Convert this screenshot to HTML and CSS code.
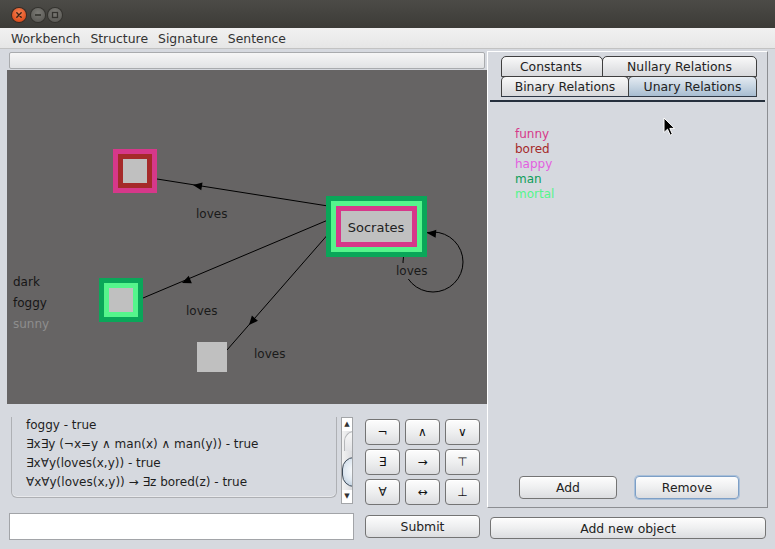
FILE: index.html
```html
<!DOCTYPE html>
<html>
<head>
<meta charset="utf-8">
<link rel="stylesheet" href="styles.css">
</head>
<body>
<div class="window">
  <div class="titlebar">
    <span class="wbtn close"><svg width="14" height="14" viewBox="0 0 14 14"><path d="M4.8 4.8 L9.2 9.2 M9.2 4.8 L4.8 9.2" stroke="#3a2418" stroke-width="1.4" stroke-linecap="round"/></svg></span>
    <span class="wbtn gray"><svg width="14" height="14" viewBox="0 0 14 14"><path d="M4 7 H10" stroke="#33322e" stroke-width="1.6"/></svg></span>
    <span class="wbtn gray"><svg width="14" height="14" viewBox="0 0 14 14"><rect x="4.5" y="4.5" width="5" height="5" fill="none" stroke="#33322e" stroke-width="1.3"/></svg></span>
  </div>
  <div class="menubar">
    <span>Workbench</span><span>Structure</span><span>Signature</span><span>Sentence</span>
  </div>
  <div class="main">
    <div class="left">
      <div class="progress"></div>
      <div class="canvas">
        <svg width="480" height="334" viewBox="0 0 480 334" class="graph">
          <g stroke="#000" stroke-width="1" fill="none">
            <line x1="321" y1="136" x2="150" y2="109"/>
            <line x1="321" y1="150" x2="136" y2="228"/>
            <line x1="323" y1="162" x2="220" y2="280"/>
            <circle cx="426" cy="192" r="30"/>
          </g>
          <g fill="#000">
            <polygon points="0,0 -9,-4 -9,4" transform="translate(186 115) rotate(189)"/>
            <polygon points="0,0 -9,-4 -9,4" transform="translate(175 213) rotate(157)"/>
            <polygon points="0,0 -9,-4 -9,4" transform="translate(242 255) rotate(131)"/>
            <polygon points="0,0 -9,-4 -9,4" transform="translate(420 163) rotate(185)"/>
          </g>
          <rect x="106" y="79" width="44" height="44" fill="#d6388a"/>
          <rect x="111" y="84" width="34" height="34" fill="#a52a2a"/>
          <rect x="116" y="89" width="24" height="24" fill="#c0c0c0"/>

          <rect x="319" y="126" width="101" height="61" fill="#0aa659"/>
          <rect x="324" y="131" width="91" height="51" fill="#55f58c"/>
          <rect x="329" y="136" width="81" height="41" fill="#d6388a"/>
          <rect x="334" y="141" width="71" height="31" fill="#c0c0c0"/>
          <text x="369" y="162" class="node-label" text-anchor="middle">Socrates</text>

          <rect x="92" y="208" width="44" height="44" fill="#0aa659"/>
          <rect x="97" y="213" width="34" height="34" fill="#55f58c"/>
          <rect x="102" y="218" width="24" height="24" fill="#c0c0c0"/>

          <rect x="190" y="272" width="30" height="30" fill="#c0c0c0"/>

          <text x="189" y="148" class="edge-label">loves</text>
          <text x="179" y="245" class="edge-label">loves</text>
          <text x="247" y="288" class="edge-label">loves</text>
          <rect x="389" y="193" width="32" height="16" fill="#666464"/>
          <text x="389" y="205" class="edge-label">loves</text>

          <text x="6" y="216" class="prop">dark</text>
          <text x="6" y="237" class="prop">foggy</text>
          <text x="6" y="258" class="prop off">sunny</text>
        </svg>
      </div>
      <div class="bottom">
        <div class="formulas">
          <div class="flist">
            <div class="flist-inner">
              <div>foggy - true</div>
              <div>∃x∃y (¬x=y ∧ man(x) ∧ man(y)) - true</div>
              <div>∃x∀y(loves(x,y)) - true</div>
              <div>∀x∀y(loves(x,y)) → ∃z bored(z) - true</div>
            </div>
          </div>
          <div class="scroll">
            <div class="sb-arrow">▲</div>
            <div class="sb-track"><div class="sb-cap"></div><div class="sb-thumb"></div></div>
            <div class="sb-arrow">▼</div>
          </div>
        </div>
        <div class="symbols">
          <button class="btn sym">¬</button>
          <button class="btn sym">∧</button>
          <button class="btn sym">∨</button>
          <button class="btn sym">∃</button>
          <button class="btn sym">→</button>
          <button class="btn sym">⊤</button>
          <button class="btn sym">∀</button>
          <button class="btn sym">↔</button>
          <button class="btn sym">⊥</button>
        </div>
        <div class="input"></div>
        <button class="btn submit">Submit</button>
      </div>
    </div>
    <div class="right">
      <div class="relpanel">
        <div class="tabs">
          <div class="tabrow row1">
            <div class="tab t-const">Constants</div>
            <div class="tab t-null">Nullary Relations</div>
          </div>
          <div class="tabrow row2">
            <div class="tab t-bin">Binary Relations</div>
            <div class="tab t-un sel">Unary Relations</div>
          </div>
        </div>
        <div class="tabline"></div>
        <div class="tabbody">
          <ul class="rels">
            <li class="c-funny">funny</li>
            <li class="c-bored">bored</li>
            <li class="c-happy">happy</li>
            <li class="c-man">man</li>
            <li class="c-mortal">mortal</li>
          </ul>
          <div class="relbtns">
            <button class="btn add">Add</button>
            <button class="btn remove">Remove</button>
          </div>
        </div>
      </div>
      <button class="btn addobj">Add new object</button>
    </div>
  </div>
</div>
<svg class="cursor" width="14" height="20" viewBox="0 0 14 20"><path d="M1 1 L1 15.5 L4.5 12.2 L7.2 18.2 L9.4 17.2 L6.8 11.4 L11.6 11.4 Z" fill="#000" stroke="#fff" stroke-width="1" stroke-linejoin="round"/></svg>
</body>
</html>
```

FILE: styles.css
```css
* { box-sizing: border-box; }
html, body { margin: 0; padding: 0; }
body {
  width: 775px;
  height: 549px;
  overflow: hidden;
  background: #d6d9df;
  font-family: "DejaVu Sans", "Liberation Sans", sans-serif;
  font-size: 12.4px;
  color: #222;
  position: relative;
}
.window {
  width: 775px;
  height: 549px;
  display: flex;
  flex-direction: column;
}
.titlebar {
  height: 28px;
  flex: none;
  background: linear-gradient(#4c4b47, #3c3b37);
  display: flex;
  align-items: center;
  padding-left: 12px;
  padding-top: 2px;
}
.wbtn {
  width: 14px;
  height: 14px;
  border-radius: 50%;
  display: block;
  margin-right: 5px;
}
.wbtn svg { display: block; }
.wbtn.close {
  background: radial-gradient(circle at 50% 35%, #f68456, #e0501f 70%, #b8411a);
  box-shadow: 0 0 0 1px #3a2a22;
}
.wbtn.gray {
  background: radial-gradient(circle at 50% 35%, #7b7a75, #5d5c58 75%);
  box-shadow: 0 0 0 1px #33322e;
  margin-right: 3px;
}
.menubar {
  height: 21px;
  flex: none;
  background: linear-gradient(#f1f1f1, #e6e6e6);
  border-bottom: 1px solid #c2c2c2;
  padding-left: 6px;
  display: flex;
  align-items: center;
  color: #333;
}
.menubar span { padding: 0 5px; }
.main {
  flex: 1;
  display: flex;
}
.left {
  width: 487px;
  flex: none;
}
.progress {
  margin: 3px 0 0 9px;
  width: 476px;
  height: 17px;
  border: 1px solid #a9abae;
  border-radius: 2px;
  background: linear-gradient(#f6f6f6, #e2e3e5);
}
.canvas {
  margin: 1px 0 0 7px;
  width: 480px;
  height: 334px;
  background: #666464;
}
.graph { display: block; }
.node-label { font-family: "DejaVu Sans", sans-serif; font-size: 13px; fill: #222; }
.edge-label { font-family: "DejaVu Sans", sans-serif; font-size: 12px; fill: #1a1a1a; }
.prop { font-family: "DejaVu Sans", sans-serif; font-size: 12px; fill: #161616; }
.prop.off { fill: #8e8e8e; }

.bottom {
  display: grid;
  grid-template-columns: 345px 115px;
  grid-template-rows: 88px 27px;
  column-gap: 11px;
  row-gap: 8px;
  padding: 13px 0 0 9px;
}
.formulas {
  display: flex;
  align-items: flex-start;
}
.flist {
  margin-left: 2px;
  width: 326px;
  height: 81px;
  border: 1px solid #aeb0b4;
  border-top: none;
  border-radius: 0 0 6px 6px;
  overflow: hidden;
  padding-left: 14px;
  color: #1e1e1e;
  font-size: 12px;
  box-shadow: inset 0 -1px 0 #e8e9ec;
}
.flist-inner {
  margin-top: -1px;
  line-height: 19px;
  white-space: nowrap;
}
.scroll {
  margin-left: 4px;
  width: 12px;
  height: 87px;
  border: 1px solid #a3a5a8;
  background: #fff;
  display: flex;
  flex-direction: column;
  overflow: hidden;
}
.sb-arrow {
  height: 13px;
  font-size: 7px;
  line-height: 13px;
  text-align: center;
  color: #333;
  flex: none;
}
.sb-track {
  flex: 1;
  background: linear-gradient(to right, #f3f3f3, #dcdde0);
  overflow: hidden;
}
.sb-cap {
  height: 20px;
  margin-left: 2px;
  width: 20px;
  border-radius: 10px 0 0 0;
  border-left: 1px solid #b5b7ba;
  border-top: 1px solid #b5b7ba;
  background: linear-gradient(#f7f7f7, #e2e3e6);
}
.sb-thumb {
  margin-top: 6px;
  width: 24px;
  height: 30px;
  border-radius: 15px;
  border: 1px solid #3d4a58;
  background: radial-gradient(circle at 55% 45%, #ffffff, #dfe8f1 55%, #a9bdd1);
}

.symbols {
  margin-top: 2px;
  display: grid;
  grid-template-columns: 35px 35px 35px;
  grid-template-rows: 26px 26px 26px;
  column-gap: 5px;
  row-gap: 4px;
}
.btn {
  font-family: "DejaVu Sans", "Liberation Sans", sans-serif;
  font-size: 12.4px;
  color: #222;
  border: 1px solid #747474;
  border-radius: 4px;
  background: linear-gradient(#fdfdfd, #eeeff0 50%, #dcdde0);
  padding: 0;
  margin: 0;
  box-shadow: inset 0 1px 0 #fff;
}
.sym { font-size: 12px; color: #111; }
.input {
  height: 27px;
  background: #fff;
  border: 1px solid #a2a4a8;
}
.submit {
  margin-top: 2px;
  height: 23px;
  width: 115px;
}

.right {
  flex: 1;
}
.relpanel {
  margin-top: 2px;
  width: 281px;
  height: 457px;
  border-left: 1px solid #fff;
  border-top: 1px solid #fff;
  border-right: 1px solid #8c8e92;
  border-bottom: 1px solid #8c8e92;
  display: flex;
  flex-direction: column;
}
.tabs {
  padding: 4px 0 0 13px;
}
.tabrow {
  display: flex;
}
.row1 { height: 20px; }
.row2 { height: 21px; }
.tab {
  border: 1px solid #3f3f3f;
  border-radius: 5px 5px 0 0;
  background: linear-gradient(#f9f9f9, #e4e5e7 60%, #d8d9dc);
  display: flex;
  align-items: center;
  justify-content: center;
  color: #222;
  white-space: nowrap;
  height: 21px;
}
.row2 .tab { border-bottom: 1px solid #2e3846; }
.t-const { width: 102px; padding-right: 2px; }
.t-null { width: 155px; margin-left: -1px; }
.t-bin { width: 128px; }
.t-un { width: 129px; margin-left: -1px; }
.tab.sel {
  background: linear-gradient(#e4ebf2, #c3d2e0 55%, #a8bdd1);
}
.tabline {
  margin: 3px 2px 0 2px;
  height: 2px;
  background: #26303d;
}
.tabbody {
  flex: 1;
  display: flex;
  flex-direction: column;
}
.rels {
  list-style: none;
  margin: 0;
  padding: 25px 0 0 27px;
  font-size: 12px;
  line-height: 15px;
}
.c-funny { color: #d6388a; }
.c-bored { color: #a52a2a; }
.c-happy { color: #e35fe0; }
.c-man { color: #0e9e5a; }
.c-mortal { color: #55f58c; }
.relbtns {
  margin-top: auto;
  margin-bottom: 8px;
  padding-left: 31px;
  display: flex;
  gap: 18px;
}
.add { width: 98px; height: 23px; }
.remove {
  width: 104px;
  height: 23px;
  border-color: #7d9fc6;
  box-shadow: 0 0 0 1px #a9c0da;
}
.addobj {
  margin: 9px 0 0 3px;
  width: 276px;
  height: 22px;
  display: block;
}
.cursor {
  position: absolute;
  left: 663px;
  top: 117px;
}
```
